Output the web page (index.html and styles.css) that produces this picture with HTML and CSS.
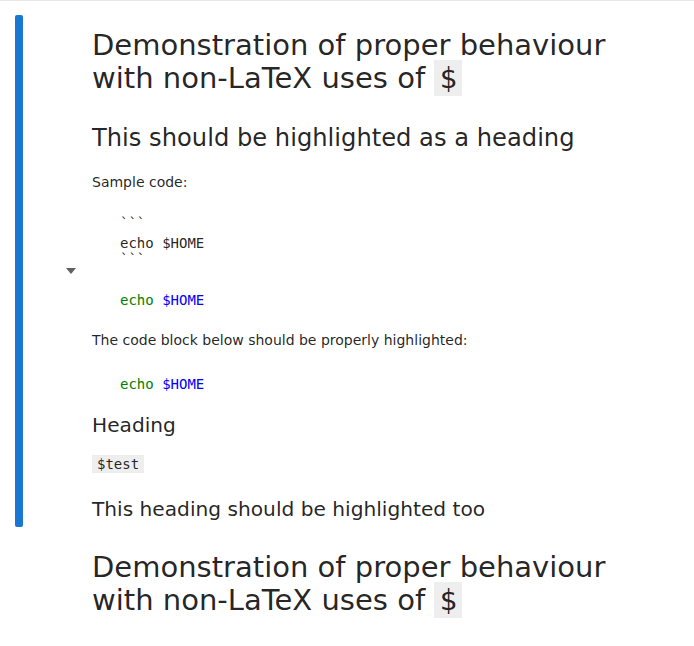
FILE: index.html
```html
<!DOCTYPE html>
<html>
<head>
<meta charset="utf-8">
<link rel="stylesheet" href="styles.css">
</head>
<body>
<div class="notebook">
  <div class="cell active">
    <div class="collapser"></div>
    <div class="gutter">
      <span class="heading-toggle" title="Collapse heading"></span>
    </div>
    <div class="md">
      <h1>Demonstration of proper behaviour with non-LaTeX uses of <code>$</code></h1>
      <h2>This should be highlighted as a heading</h2>
      <p class="p-first">Sample code:</p>
      <pre class="raw"><span class="ln ln-first">```</span><span class="ln">echo $HOME</span><span class="ln">```</span></pre>
      <pre class="hl hl-first"><span class="builtin">echo</span> <span class="var">$HOME</span></pre>
      <p class="p-second">The code block below should be properly highlighted:</p>
      <pre class="hl hl-second"><span class="builtin">echo</span> <span class="var">$HOME</span></pre>
      <h3>Heading</h3>
      <p class="p-code"><code>$test</code></p>
      <h3>This heading should be highlighted too</h3>
    </div>
  </div>
  <div class="cell">
    <div class="collapser-space"></div>
    <div class="gutter"></div>
    <div class="md">
      <h1>Demonstration of proper behaviour with non-LaTeX uses of <code>$</code></h1>
    </div>
  </div>
</div>
</body>
</html>
```

FILE: styles.css
```css
html, body {
  margin: 0;
  padding: 0;
  background: #ffffff;
}

body {
  font-family: "DejaVu Sans", sans-serif;
  color: rgba(0, 0, 0, 0.87);
  font-size: 14px;
}

.notebook {
  border-top: 1px solid #e6e6e6;
  padding: 0 24px 0 15px;
}

.cell {
  display: flex;
  align-items: stretch;
}

.cell.active {
  margin-top: 14px;
}

.collapser,
.collapser-space {
  width: 8px;
  flex: none;
}

.collapser {
  background: #1976d2;
  border-radius: 2px;
}

.gutter {
  width: 69px;
  flex: none;
  position: relative;
}

.heading-toggle {
  position: absolute;
  left: 43px;
  top: 253px;
  width: 0;
  height: 0;
  border-left: 5.5px solid transparent;
  border-right: 5.5px solid transparent;
  border-top: 6px solid #616161;
}

.md {
  flex: 1;
  min-width: 0;
}

.cell.active .md {
  padding-top: 13.6px;
  padding-bottom: 6.2px;
}

.cell + .cell .md {
  padding-top: 24px;
}

h1, h2, h3, p, pre {
  margin: 0;
}

h1 {
  font-size: 29.03px;
  font-weight: 400;
  line-height: 1.15;
}

h2 {
  font-size: 24.19px;
  font-weight: 400;
  line-height: 1.2;
  margin-top: 29px;
}

h3 {
  font-size: 20.16px;
  font-weight: 400;
  line-height: 1.2;
  margin-top: 21.5px;
}

p {
  line-height: 1.6;
}

.p-first {
  margin-top: 18px;
}

.p-second {
  margin-top: 21px;
}

.p-code {
  margin-top: 15.3px;
}

code,
pre {
  font-family: "DejaVu Sans Mono", monospace;
}

code {
  font-size: 100%;
  background: #eeeeee;
  padding: 1px 5px;
}

pre {
  font-size: 14px;
  line-height: 16px;
  margin-left: 28px;
}

.raw {
  margin-top: 21px;
}

.ln {
  display: block;
}

.ln-first {
  margin-bottom: 4.5px;
}

.hl-first {
  margin-top: 25px;
}

.hl-second {
  margin-top: 24px;
}

.builtin {
  color: #008000;
}

.var {
  color: #0000ff;
}
```
